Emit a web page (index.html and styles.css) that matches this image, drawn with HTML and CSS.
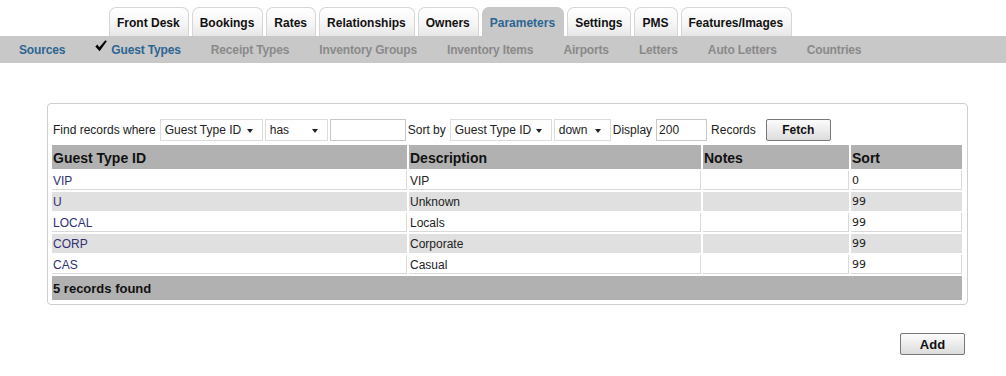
FILE: index.html
```html
<!DOCTYPE html>
<html>
<head>
<meta charset="utf-8">
<title>Guest Types</title>
<link rel="stylesheet" href="styles.css">
</head>
<body>
<div class="tabs">
  <a class="tab">Front Desk</a>
  <a class="tab">Bookings</a>
  <a class="tab">Rates</a>
  <a class="tab">Relationships</a>
  <a class="tab">Owners</a>
  <a class="tab active">Parameters</a>
  <a class="tab">Settings</a>
  <a class="tab">PMS</a>
  <a class="tab">Features/Images</a>
</div>
<div class="subnav">
  <a class="sub link">Sources</a>
  <a class="sub link current"><svg class="check" width="12" height="12" viewBox="0 0 12 12"><path d="M0.3 6.4 L2.4 4.6 L4.3 7.2 L10.4 0.2 L11.8 1.3 L4.6 11.2 Z" fill="#000"/></svg>Guest Types</a>
  <a class="sub">Receipt Types</a>
  <a class="sub">Inventory Groups</a>
  <a class="sub">Inventory Items</a>
  <a class="sub">Airports</a>
  <a class="sub">Letters</a>
  <a class="sub">Auto Letters</a>
  <a class="sub">Countries</a>
</div>

<div class="panel">
  <div class="filter">
    <span class="lbl">Find records where</span>
    <span class="sel w103">Guest Type ID<i class="arrow"></i></span>
    <span class="sel w63">has<i class="arrow"></i></span>
    <span class="inp w76"></span>
    <span class="lbl">Sort by</span>
    <span class="sel w102">Guest Type ID<i class="arrow"></i></span>
    <span class="sel w57">down<i class="arrow"></i></span>
    <span class="lbl">Display</span>
    <span class="inp w51">200</span>
    <span class="lbl">Records</span>
    <button class="btn fetch">Fetch</button>
  </div>
  <table class="grid">
    <colgroup>
      <col class="c1"><col class="c2"><col class="c3"><col class="c4">
    </colgroup>
    <thead>
      <tr><th>Guest Type ID</th><th>Description</th><th>Notes</th><th>Sort</th></tr>
    </thead>
    <tbody>
      <tr><td><a class="rec">VIP</a></td><td>VIP</td><td></td><td class="num">0</td></tr>
      <tr class="alt"><td><a class="rec">U</a></td><td>Unknown</td><td></td><td class="num">99</td></tr>
      <tr><td><a class="rec">LOCAL</a></td><td>Locals</td><td></td><td class="num">99</td></tr>
      <tr class="alt"><td><a class="rec">CORP</a></td><td>Corporate</td><td></td><td class="num">99</td></tr>
      <tr><td><a class="rec">CAS</a></td><td>Casual</td><td></td><td class="num">99</td></tr>
    </tbody>
    <tfoot>
      <tr><td colspan="4">5 records found</td></tr>
    </tfoot>
  </table>
</div>
<div class="actions">
  <button class="btn add">Add</button>
</div>
</body>
</html>
```
FILE: styles.css
```css
html, body {
  margin: 0;
  padding: 0;
  background: #fff;
  font-family: "Liberation Sans", Arial, sans-serif;
  color: #222;
}

.tabs {
  display: flex;
  gap: 3px;
  padding: 7px 0 0 109px;
  height: 29px;
}
.tab {
  display: flex;
  align-items: center;
  height: 29px;
  box-sizing: border-box;
  padding: 1px 8px 0 7px;
  border: 1px solid #d6d6d6;
  border-bottom: none;
  border-radius: 7px 7px 0 0;
  background: linear-gradient(#ffffff 0%, #f6f6f6 55%, #e6e6e6 100%);
  font-size: 12px;
  font-weight: bold;
  color: #111;
}
.tab.active {
  background: #c8c8c8;
  border-color: #c8c8c8;
  color: #2d6592;
}

.subnav {
  display: flex;
  align-items: center;
  gap: 30px;
  height: 27px;
  padding-left: 19px;
  background: #c8c8c8;
}
.sub {
  font-size: 12px;
  font-weight: bold;
  letter-spacing: -0.15px;
  color: #8a8a8a;
  display: flex;
  align-items: center;
  padding-top: 1px;
}
.sub.link {
  color: #2d6592;
}
.check {
  margin: -8px 4px 0 0;
}

.panel {
  margin: 40px 0 0 47px;
  width: 921px;
  box-sizing: border-box;
  border: 1px solid #cfcfcf;
  border-radius: 4px;
  padding: 14px 3px 2px 2px;
}

.filter {
  display: flex;
  align-items: center;
  height: 23px;
  margin-bottom: 2px;
  padding-left: 3px;
  font-size: 12px;
  color: #222;
}
.lbl {
  margin-right: 4px;
}
.sel, .inp {
  position: relative;
  display: flex;
  align-items: center;
  box-sizing: border-box;
  height: 22px;
  border: 1px solid #dcdcdc;
  background: #fff;
  padding-left: 4px;
  margin-right: 2px;
  font-size: 12px;
  color: #222;
}
.inp {
  border-color: #c8c8c8;
  padding-left: 2px;
}
.arrow {
  position: absolute;
  right: 9px;
  top: 9px;
  width: 0;
  height: 0;
  border-left: 3.5px solid transparent;
  border-right: 3.5px solid transparent;
  border-top: 4px solid #222;
}
.w103 { width: 103px; }
.w63 { width: 63px; }
.w76 { width: 76px; }
.w102 { width: 102px; }
.w57 { width: 57px; }
.w51 { width: 51px; margin-right: 4px; }

.btn {
  font-family: "Liberation Sans", Arial, sans-serif;
  font-size: 12px;
  font-weight: bold;
  color: #111;
  border: 1px solid #777;
  border-radius: 2px;
  background: linear-gradient(#fbfbfb 0%, #ececec 50%, #dcdcdc 100%);
  box-sizing: border-box;
  padding: 0;
  cursor: pointer;
}
.fetch {
  width: 65px;
  height: 22px;
  margin-left: 6px;
}

.grid {
  width: 100%;
  table-layout: fixed;
  border-collapse: separate;
  border-spacing: 2px;
  font-size: 12px;
}
.c1 { width: 355px; }
.c2 { width: 292px; }
.c3 { width: 146px; }
.grid th {
  background: #b1b1b1;
  text-align: left;
  font-size: 14px;
  font-weight: bold;
  color: #111;
  height: 24px;
  box-sizing: border-box;
  padding: 1px 1px 0;
}
.grid td {
  height: 19px;
  box-sizing: border-box;
  padding: 1px 1px 0;
  border-right: 1px solid #d9d9d9;
  border-bottom: 1px solid #d9d9d9;
  color: #222;
  font-size: 12px;
}
.grid tr.alt td {
  background: #e0e0e0;
  border-color: #e0e0e0;
}
.grid td.num {
  font-family: "DejaVu Sans", Verdana, sans-serif;
  font-size: 11px;
}
.rec {
  color: #303074;
  text-decoration: none;
}
.grid tfoot td {
  background: #b1b1b1;
  border: none;
  height: 24px;
  font-size: 13px;
  font-weight: bold;
  color: #111;
  padding-top: 1px;
}

.actions {
  display: flex;
  justify-content: flex-end;
  padding: 28px 41px 0 0;
}
.add {
  width: 65px;
  height: 22px;
  font-size: 13px;
}
```
